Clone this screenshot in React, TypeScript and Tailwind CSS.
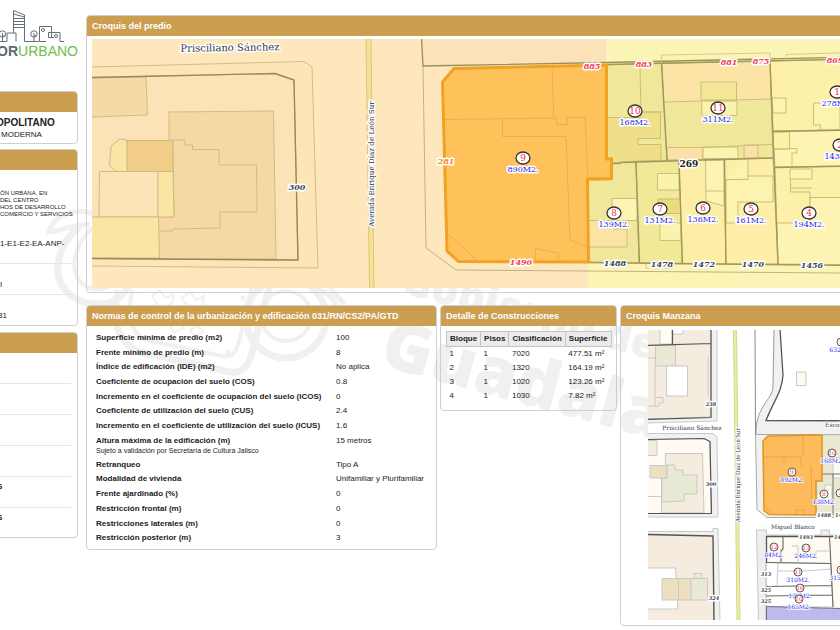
import type { ReactNode } from "react";
import clsx from "clsx";

const NORMAS: { label: string; value: string; note?: string }[] = [
  { label: "Superficie mínima de predio (m2)", value: "100" },
  { label: "Frente mínimo de predio (m)", value: "8" },
  { label: "Índice de edificación (IDE) (m2)", value: "No aplica" },
  { label: "Coeficiente de ocupación del suelo (COS)", value: "0.8" },
  { label: "Incremento en el coeficiente de ocupación del suelo (ICOS)", value: "0" },
  { label: "Coeficiente de utilización del suelo (CUS)", value: "2.4" },
  { label: "Incremento en el coeficiente de utilización del suelo (ICUS)", value: "1.6" },
  { label: "Altura máxima de la edificación (m)", value: "15 metros", note: "Sujeto a validación por Secretaría de Cultura Jalisco" },
  { label: "Retranqueo", value: "Tipo A" },
  { label: "Modalidad de vivienda", value: "Unifamiliar y Plurifamiliar" },
  { label: "Frente ajardinado (%)", value: "0" },
  { label: "Restricción frontal (m)", value: "0" },
  { label: "Restricciones laterales (m)", value: "0" },
  { label: "Restricción posterior (m)", value: "3" },
];

const BLOQUES = [
  ["1", "1", "7020", "477.51 m²"],
  ["2", "1", "1320", "164.19 m²"],
  ["3", "1", "1020", "123.26 m²"],
  ["4", "1", "1030", "7.82 m²"],
];

function Panel({ title, className, children }: { title?: string; className?: string; children: ReactNode }) {
  return (
    <section className={clsx("overflow-hidden rounded border border-[#cfcfcf]", className)}>
      <h2 className="h-5 bg-[#cc9e50] px-[5px] text-[9px] leading-5 font-bold whitespace-nowrap text-white">{title}</h2>
      {children}
    </section>
  );
}

type Pt = { x: number; y: number; t: string };

function Parcel({ x, y, n, area, small }: { x: number; y: number; n: string; area: string; small?: boolean }) {
  return (
    <g textAnchor="middle" stroke="#fff" paintOrder="stroke" strokeWidth={small ? 1.5 : 3} strokeLinejoin="round">
      <ellipse cx={x} cy={y} rx={small ? 4 : 7} ry={small ? 4 : 6} fill="#fff" stroke="#333" strokeWidth={small ? 0.8 : 1.3} paintOrder="normal" />
      <text x={x} y={y + (small ? 2 : 3)} fontSize={small ? 6 : 9} fill="#f52f40" strokeWidth="0">{n}</text>
      <text x={x} y={y + (small ? 10 : 14)} fontSize={small ? 6 : 8} fill="#1f1ff0">{area}</text>
    </g>
  );
}

function Numbers({ items, size, color }: { items: Pt[]; size: number; color: string }) {
  return (
    <g fontSize={size} fill={color} fontWeight="bold" fontStyle="italic" textAnchor="middle" stroke="#fff" strokeWidth="3" strokeLinejoin="round" paintOrder="stroke">
      {items.map((p) => (
        <text key={p.t + p.x + p.y} x={p.x} y={p.y}>{p.t}</text>
      ))}
    </g>
  );
}

function CroquisPredio() {
  return (
    <svg className="block h-[249px] w-full" fontFamily="'DejaVu Serif', serif" role="img" aria-label="Croquis del predio">
      <g transform="translate(-92 -39)" stroke="#cfbd86" strokeWidth="1">
        <rect x="92" y="39" width="2400" height="249" fill="#fee7bc" stroke="none" />
        <path d="M606 39H2400V288H588V179H606Z" fill="#fcf4b5" stroke="none" />

        {/* west block */}
        <path d="M91 67L304 61.5L312 67L318 268L91 266Z" fill="#fde5ba" />
        <path d="M91 77.5L275 73.5L294 80L298 260L91 258.5Z" fill="#fce3b7" />
        <path d="M91 78L146 77L147.5 115L91 117Z" fill="#f6d9a4" />
        <path d="M169 112L273.5 111L276 259H159L158 217H174L173 140H169Z" fill="#f5d8a3" />
        <path d="M173 140H185V145H192.5V149.500H219V165H256.5L257 212H220V228L173 229V231H158" fill="none" />
        <path d="M127 140L120 139L111 146L109.500 166L117 171.500H127Z" fill="#fae5a5" />
        <path d="M127 140.500H173V171.500H127Z" fill="#f1cd87" />
        <path d="M99.500 171.500H158V217H99Z" fill="#fde3b8" />
        <path d="M158 171.500H173L174 217H158Z" fill="#fae5a5" />
        <path d="M91 217H158.500L159.500 258H91Z" fill="#fae5a5" />
        <path d="M91 77.500L275 73.500L294 80L298 260L91 258.500" fill="none" stroke="#98885a" strokeWidth="1.4" />

        {/* avenue median */}
        <path d="M366 38L369.500 289H374L371 38Z" fill="#f3e296" stroke="#dcc678" />

        {/* selected lot and its pavement */}
        <path d="M422 38L423 66L606 62V38Z" fill="#fce2b8" stroke="none" />
        <path d="M423 66L426 248L456 270L840 273H900" fill="none" stroke="#bfb189" />
        <path d="M421.500 38L423 66L606 62.500L900 56" fill="none" stroke="#98905c" strokeWidth="1.3" />

        <path d="M661.500 64V55L770 53V61M786 59V54.500L900 51M646 264V268H673V264" fill="none" stroke="#d8cc86" />
        <g stroke="#cbbf78">
          <path d="M607 65L662 63L667 161L611 163L607 158Z" fill="#f1e79b" />
          <path d="M607 117.500H641V112H660.500V138.500H638V144.500H661V161L612 163V158H607Z" fill="#eedf88" />
          <path d="M640 68L641 112H662" fill="none" />
          <path d="M662 63L770 61L773 158L667 160Z" fill="#f1e79b" />
          <path d="M662 63L770 61L771 99L664 102Z" fill="#fce3a6" />
          <path d="M701 82H736.500V100H701Z" fill="#f1e796" />
          <path d="M701.500 101H737V115.500H702Z" fill="#fbf2ae" />
          <path d="M667 147.500H703V160H667ZM744 145H758V158H744Z" fill="#fbe1a5" />
          <path d="M703 147H738V158.500H703Z" fill="#fbf3b0" />
          <path d="M703 147.500L772 144.500" fill="none" />
          <path d="M770 61L900 58V129L773 131Z" fill="#fdf0a8" />
          <path d="M772 98H786V113H773ZM840 103H813.500V125H820.500V130H840Z" fill="#fbf3b0" />
          <path d="M773 131L900 129V166L775 167Z" fill="#fdf4b3" />
          <path d="M773 132H789.500V149H773Z" fill="#fdf0a8" />
          <path d="M789.500 148.500H797V153H792V167M773 149H790" fill="none" />
          <path d="M775 167L900 165V266L778 264Z" fill="#fdf0a8" />
          <path d="M790 169H812V179H790Z" fill="#fdf4b3" />
          <path d="M810 197.500H900V265L778 264L777 223H810Z" fill="#fdf4b3" />
          <path d="M790.500 179V192H810V203M810 197.500H840M812 188H790.500" fill="none" />
          <path d="M588 180H611L612 163L636 161L639 263L588 262Z" fill="#f1e79b" />
          <path d="M612 198.500H637V220.500H612Z" fill="#fdf4b3" />
          <path d="M588 220.500H612L614 229H627V247H588Z" fill="#fbe3a5" />
          <path d="M636 161L679 160L682 264L639 263Z" fill="#f1e998" />
          <path d="M657.500 173.500H679V190H657.500ZM660 223H681V240.500H660Z" fill="#fbf2ae" />
          <path d="M658 199H681V213.500H658Z" fill="#eddb80" />
          <path d="M679 160L724 159L726 264H682Z" fill="#fdeea6" />
          <path d="M705.500 160H724V206L706 201Z" fill="#fdf4b3" />
          <path d="M705 191H724" fill="none" />
          <path d="M724 159L773 158L778 264H726Z" fill="#fdeea8" />
          <path d="M726 179.500H748V160M748 176H773V202H738V223H726V179.500" fill="#fdf3b0" />
        </g>
        <g fill="none" stroke="#a3975a" strokeWidth="1.4">
          <path d="M611 163.500H620L621 162.500L773 158" />
          <path d="M607 64.500L900 58" />
          <path d="M661.500 64L667 160M770 61L778 264M636 162L639.500 263M679 160L682.500 264M724.500 159L726 264" />
          <path d="M773 131.500L900 129M775 167.500L900 165" />
          <path d="M588 262.500L900 266" />
        </g>

        <path d="M454 68.500L606.500 65V159H611.500V178.500L587.500 179L588.500 262L458.500 261.500L447 251L442.500 82Z" fill="#ffc25b" stroke="#f0a223" strokeWidth="3" />
        <path
          d="M445 119.500L556.500 118V124.500H567V117.500H585L588 178M502.500 119V136.500H566L570 240L587 247M552 69L554 118M447 233L478 261M535.500 261V248.500L558 253V260"
          fill="none"
          stroke="#e8ae50"
        />
      </g>

      <g transform="translate(-92 -39)">
        <g fill="#2f3644" stroke="#fff" strokeWidth="3" strokeLinejoin="round" paintOrder="stroke" textAnchor="middle" fontSize="9">
          <text x="230" y="51" fontSize="10" transform="rotate(-1 230 51)">Prisciliano Sánchez</text>
          <text x="163" y="0" transform="translate(374 327) rotate(-90)" fontFamily="'DejaVu Serif Condensed', 'DejaVu Serif', serif" fontSize="8">
            Avenida Enrique Díaz de León Sur
          </text>
          <text x="689" y="167" fill="#222" fontWeight="bold">269</text>
        </g>
        <Numbers size={8} color="#3c4656" items={[
          { x: 297, y: 190, t: "300" },
          { x: 615, y: 266, t: "1488" },
          { x: 662, y: 267, t: "1478" },
          { x: 704, y: 267, t: "1472" },
          { x: 753, y: 267, t: "1470" },
          { x: 812, y: 268, t: "1456" },
        ]} />
        <Numbers size={8} color="#f53f52" items={[
          { x: 592, y: 69, t: "885" },
          { x: 644, y: 67, t: "883" },
          { x: 729, y: 65, t: "881" },
          { x: 761, y: 64, t: "875" },
          { x: 835, y: 63, t: "869" },
          { x: 521, y: 265, t: "1490" },
        ]} />
        <Numbers size={8} color="#f28a1c" items={[{ x: 446, y: 164, t: "281" }]} />
        <Parcel x={523} y={158} n="9" area="890M2." />
        <Parcel x={635} y={111} n="10" area="168M2." />
        <Parcel x={718} y={108} n="11" area="311M2." />
        <Parcel x={614} y={213} n="8" area="139M2." />
        <Parcel x={660} y={209} n="7" area="131M2." />
        <Parcel x={703} y={208} n="6" area="136M2." />
        <Parcel x={751} y={209} n="5" area="161M2." />
        <Parcel x={809} y={213} n="4" area="194M2." />
        <Parcel x={837} y={92} n="1" area="278M2." />
        <Parcel x={840} y={145} n="2" area="143M2." />
      </g>
    </svg>
  );
}

function CroquisManzana() {
  return (
    <svg className="block h-[290px] w-full" fontFamily="'DejaVu Serif', serif" role="img" aria-label="Croquis Manzana">
      <g transform="translate(-648 -330)" stroke="#c9c9c5" strokeWidth="1">
        <rect x="648" y="330" width="2400" height="290" fill="#fff" stroke="none" />

        {/* west blocks */}
        <path d="M647 329H717V421L647 423Z" fill="#f1f1f1" />
        <path d="M647 329H711V417L647 419Z" fill="#f5ece0" />
        <path d="M660 329H672V344H660Z" fill="#fffdf5" />
        <path d="M672 329H683V334H672Z" fill="#fff" />
        <path d="M655.500 345.500H675.500V366H655.500Z" fill="#e8ead6" />
        <path d="M666.500 366H687.500V396H666.500Z" fill="#fff" />
        <path d="M655 366V406H648M655 397.500H663V403H659V406H655M708 357V396M648 358H655" fill="none" />
        <path d="M711 329V417.500L647 419.500M647 345.500L711 343.500M672.500 329V344" fill="none" stroke="#555" strokeWidth="1.2" />

        <path d="M647 433.500H713L717 437L718 517H647Z" fill="#f1f1f1" />
        <path d="M647 439.500L704 438.500L710 441.500L711 513.500H647Z" fill="#fffbf2" />
        <path d="M647 440.500H657V455.500H647ZM665.500 453.500H702.500L704 513H661.500V478H665Z" fill="#f5ece0" />
        <path d="M667 465H675V470H683V475H697V494H684V501L662 502V478H667Z" fill="#e8ead6" />
        <path d="M650 465.500H667V478H650Z" fill="#eddfc0" />
        <path d="M648 496.500H661" fill="none" />
        <path d="M647 439.500L704 438.500L710 441.500L711.500 513.500H647" fill="none" stroke="#555" strokeWidth="1.2" />

        <path d="M647 531.500H713V528.500H718L720 621H647Z" fill="#f1f1f1" />
        <path d="M647 534.500L713 536L714 621H647Z" fill="#f5ebdf" stroke="#555" strokeWidth="1.4" />
        <path d="M647 568H675.500L678 609H647Z" fill="#fff" />
        <path d="M662 578.500H691V600H662ZM678.500 578V600" fill="#ece0c0" />
        <path d="M691 578.500H707.500V600H691ZM694 573.500H702V578.500H694Z" fill="#e8ead6" />

        <path d="M733.500 329L737 621H740L736.500 329Z" fill="#ebeda6" stroke="#d3d68a" />

        {/* north-east block */}
        <path d="M780 329L783 375C782 392 774 402 766 421H840V434H756C755 412 772 400 773 387L774 329Z" fill="#f1f1f1" stroke="none" />
        <path d="M774 329L773 387C772 400 755 408 756 434" fill="none" stroke="#999" />
        <path d="M755 329L755.500 434.500H1200" fill="none" stroke="#888" />
        <path d="M780 329L783 375C782 392 774 400 766 420.500L1200 422" fill="none" stroke="#555" strokeWidth="1.3" />
        <path d="M796.500 372H806V385.500H796.500Z" fill="#fbfaf0" />

        {/* selected block */}
        <path d="M755.500 434.500L757 509.500L767 517.500H1200V434.500Z" fill="#f1f1f1" stroke="#aaa" />
        <path d="M816 435H1200V515H816Z" fill="#e9e8d2" />
        <path d="M825 485H832V502H817V493H825ZM833 458H842V478H833Z" fill="#fbfaf0" />
        <path d="M822 474L1200 474M833 474V515" fill="none" stroke="#777" />
        <path d="M768 436L822 435V481H816V515L769 514.500L764 510.500L763 441Z" fill="#febb5c" stroke="#e3961e" strokeWidth="1.6" />
        <path d="M764 457L801 457V466M784 457V462M803 436V456M811 466L812 505L816 509M764 505L773 514M796 514V510H804V514" fill="none" stroke="#e3a550" />

        {/* south block */}
        <path d="M756.500 530H766.500V535H821V530H829.500V535H1200V621H758.500Z" fill="#eeeeee" />
        <path d="M766.500 536.500H1200V621H766.500Z" fill="#fffaf2" stroke="#555" strokeWidth="1.3" />
        <path d="M766.500 562.500L831 563.500L833 607H766.500Z" fill="#fff" />
        <path d="M792 546H798V562M816 556V551H829M778 563L777 585M778 571H805L831 569" fill="none" />
        <path d="M829.500 536L833 607M766 562.500L831 563.500M766 586.500L832 585.500M766 596L832 595M783 537V549L781 551V562" fill="none" stroke="#666" strokeWidth="1.1" />
        <path d="M766.500 606.500L840 608.500H1200V621H766.500Z" fill="#bdbbea" stroke="#6d6b9a" />
      </g>

      <g transform="translate(-648 -330)">
        <g fill="#2f3644" stroke="#fff" strokeWidth="2" strokeLinejoin="round" paintOrder="stroke" textAnchor="middle" fontSize="6">
          <text x="692" y="430">Prisciliano Sánchez</text>
          <text x="793" y="529">Miguel Blanco</text>
          <text x="825" y="427" textAnchor="start">Escobedo</text>
          <text transform="translate(740 475) rotate(-90)" fontFamily="'DejaVu Serif Condensed', 'DejaVu Serif', serif">
            Avenida Enrique Díaz de León Sur
          </text>
        </g>
        <Numbers size={5} color="#3c4656" items={[
          { x: 711, y: 406, t: "238" },
          { x: 711, y: 486, t: "300" },
          { x: 714, y: 600, t: "324" },
          { x: 806, y: 539, t: "1493" },
          { x: 841, y: 539, t: "1485" },
          { x: 824, y: 517, t: "1488" },
          { x: 842, y: 517, t: "1478" },
          { x: 766, y: 576, t: "313" },
          { x: 766, y: 592, t: "325" },
          { x: 766, y: 603, t: "325" },
        ]} />
        <Parcel small x={841} y={342} n="1" area="632M2." />
        <Parcel small x={792} y={472} n="9" area="892M2." />
        <Parcel small x={832} y={453} n="10" area="168M2." />
        <Parcel small x={824} y={494} n="8" area="138M2." />
        <Parcel small x={840} y={493} n="7" area="" />
        <Parcel small x={774} y={547} n="12" area="84M2." />
        <Parcel small x={806} y={548} n="13" area="246M2." />
        <Parcel small x={798} y={572} n="11" area="310M2." />
        <Parcel small x={841} y={570} n="9" area="315M2." />
        <Parcel small x={800} y={588} n="16" area="132M2." />
        <Parcel small x={799} y={599} n="10" area="165M2." />
      </g>
    </svg>
  );
}

function Watermark() {
  return (
    <svg className="pointer-events-none absolute inset-0 -z-10 h-full w-full" aria-hidden="true">
      <g fill="none" stroke="#f0f0f0" strokeWidth="7">
        <path d="M92 213C72 207 52 217 49 232C60 231 72 225 90 224" strokeWidth="5" />
        <path d="M80 226C50 250 48 294 88 303C125 310 140 280 130 240" />
        <path d="M92 228C70 250 68 280 90 288C105 292 118 286 122 270" strokeWidth="4" />
        <path d="M118 290C112 320 116 342 140 352L230 372C246 374 250 362 254 345L270 285" />
        <path d="M132 290C128 312 128 332 146 340L222 356C234 358 237 350 240 338L252 285" strokeWidth="4" />
        <circle cx="286" cy="318" r="40" />
        <circle cx="286" cy="316" r="25" strokeWidth="4" />
        <path d="M318 290C334 294 340 308 338 326M330 288L344 304" strokeWidth="5" />
      </g>
      <g fill="none" stroke="#f0f0f0" strokeWidth="2">
        <path d="M152 296l8 -6l6 8l8 -4l-2 10l-12 4zM182 298l8 -6l6 8l8 -4l-2 10l-12 4zM170 326l8 -4l6 6l-10 4zM190 330l8 -4l6 6l-10 4z" />
        <path d="M241 296l4 4m0 -4l-4 4M226 350l4 4m0 -4l-4 4M168 358l4 4m0 -4l-4 4" />
      </g>
      <g fill="#f0f0f0" fontFamily="'Open Sans', 'Noto Sans', sans-serif" fontWeight="800">
        <text transform="translate(399 292) rotate(15)" fontSize="42">Gobierno de</text>
        <text transform="translate(378 365) rotate(15)" fontSize="68">Guadalajara</text>
      </g>
    </svg>
  );
}

function Logo() {
  return (
    <div className="h-[91px] pt-2">
      <svg className="block h-[34px] w-full" fill="none" stroke="#62717b" strokeWidth="1" aria-hidden="true">
        <path d="M0 33.500H7V25H16V33.500M13.500 25V2.500L24.500 7V33.500H30M13.500 6L24.500 9M13.500 10.500H24.500M13.500 13.500H24.500M13.500 16.500H24.500M13.500 19.500H24.500M30 33.500H39.500V18.500H51.500V29.500M48.500 24.500H60V33.500H64M48.500 24.500V29.500H54M40 33.500H46" />
        <path d="M2.500 33V25M34 33V25M2.500 29L4.500 27M34 29L36 27" />
        <circle cx="2.500" cy="26" r="3.200" />
        <circle cx="34" cy="26" r="3.200" />
        <circle cx="43" cy="22" r="1.500" />
        <circle cx="56" cy="28" r="1.500" />
      </svg>
      <div className="flex justify-end overflow-hidden text-[14px] leading-[18px] whitespace-nowrap text-[#6cc04a]">
        <span className="font-bold text-[#5d6a73]">VISOR</span>URBANO
      </div>
    </div>
  );
}

function Sidebar() {
  return (
    <aside className="w-[78px] shrink-0">
      <Logo />
      <Panel className="-ml-2">
        <div className="pb-[3px] pl-[7px]">
          <p className="-ml-1 pt-[5px] text-[10px] leading-3 font-bold whitespace-nowrap">OPOLITANO</p>
          <p className="pl-[1px] text-[8px] leading-[11px]">MODERNA</p>
        </div>
      </Panel>
      <Panel className="mt-[5px] -ml-2">
        <div className="mr-[6px] ml-[7px]">
          <div className="border-b border-[#e6e6e6] pt-5 pb-[13px]">
            <p className="text-[6px] leading-[7px] whitespace-nowrap">
              ÓN URBANA, EN<br />DEL CENTRO<br />HOS DE DESARROLLO<br />COMERCIO Y SERVICIOS
            </p>
            <p className="mt-5 text-[8px] leading-3 whitespace-nowrap">1-E1-E2-EA-ANP-</p>
          </div>
          <p className="border-b border-[#e6e6e6] pt-4 pb-1 text-[8px] leading-[10px]">I</p>
          <p className="-ml-[2px] pt-4 pb-1 text-[8px] leading-[10px]">31</p>
        </div>
      </Panel>
      <Panel className="mt-[6px] -ml-2">
        <div className="mr-[6px] ml-1 text-[8px] leading-[10px] font-bold">
          {["", "", "", "", "S"].map((t, i) => (
            <p key={i} className="h-[31px] border-b border-[#e6e6e6] pt-[5px]">{t}</p>
          ))}
          <p className="h-[29px] pt-[5px]">S</p>
        </div>
      </Panel>
    </aside>
  );
}

export default function App() {
  return (
    <div className="relative isolate flex min-h-screen gap-2 overflow-hidden bg-white font-['Liberation_Sans',Arial,sans-serif] text-[#222]">
      <Watermark />
      <Sidebar />
      <main className="-mr-2 min-w-0 flex-1 pt-[15px]">
        <Panel title="Croquis del predio">
          <div className="px-[5px] pt-[3px] pb-1">
            <CroquisPredio />
          </div>
        </Panel>

        <div className="mt-3 flex items-start gap-[3px]">
          <Panel title="Normas de control de la urbanización y edificación 031/RN/CS2/PA/GTD" className="w-[351px] shrink-0">
            <table className="mt-[5px] mb-[3px] ml-[9px] h-[215px] text-left text-[8px] leading-[10px]">
              <tbody>
                {NORMAS.map((n) => (
                  <tr key={n.label}>
                    <th scope="row" className="w-[240px] px-0 py-[2px] align-baseline">
                      {n.label}
                      {n.note && <span className="block text-[7px] leading-[9px] font-normal">{n.note}</span>}
                    </th>
                    <td className="px-0 py-[2px] align-baseline whitespace-nowrap">{n.value}</td>
                  </tr>
                ))}
              </tbody>
            </table>
          </Panel>

          <Panel title="Detalle de Construcciones" className="w-[177px] shrink-0">
            <table className="mx-[5px] mt-[5px] mb-[7px] table-fixed border-collapse text-left text-[8px] leading-[10px]">
              <thead>
                <tr className="bg-[#ebebeb]">
                  <th className="h-[15px] w-[35px] border border-[#c4c4c4] px-[3px]">Bloque</th>
                  <th className="h-[15px] w-7 border border-[#c4c4c4] px-[3px]">Pisos</th>
                  <th className="h-[15px] w-14 border border-[#c4c4c4] px-[3px]">Clasificación</th>
                  <th className="h-[15px] w-[46px] border border-[#c4c4c4] px-[3px]">Superficie</th>
                </tr>
              </thead>
              <tbody>
                {BLOQUES.map((b) => (
                  <tr key={b[0]}>
                    {b.map((c, i) => (
                      <td key={i} className="px-[3px] py-[2px] whitespace-nowrap">{c}</td>
                    ))}
                  </tr>
                ))}
              </tbody>
            </table>
          </Panel>

          <Panel title="Croquis Manzana" className="min-w-0 flex-1">
            <div className="pt-1 pb-[5px] pl-[27px]">
              <CroquisManzana />
            </div>
          </Panel>
        </div>
      </main>
    </div>
  );
}
